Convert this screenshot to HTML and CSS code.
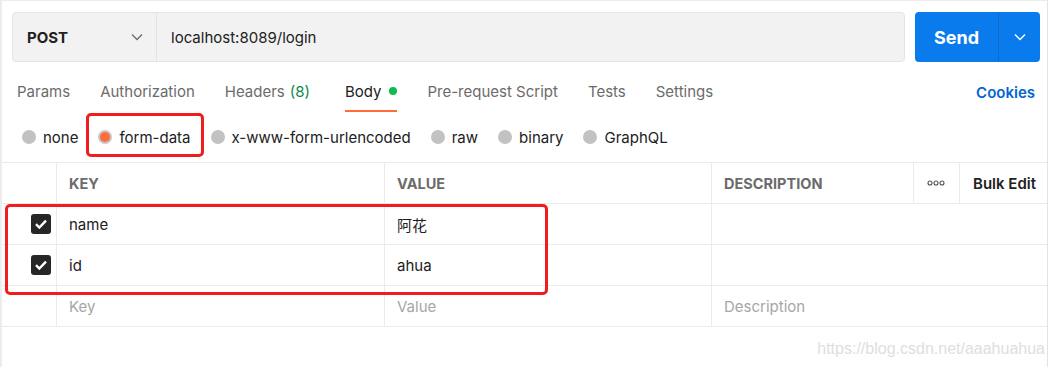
FILE: index.html
```html
<!DOCTYPE html>
<html lang="en">

<head>
    <meta charset="UTF-8">
    <meta name="viewport" content="width=device-width, initial-scale=1.0">
    <title>Request</title>
    <link rel="stylesheet" href="styles.css">
</head>

<body>
    <div class="panel">
        <!-- request bar -->
        <div class="request-bar">
            <div class="url-group">
                <div class="method">
                    <span>POST</span>
                    <svg class="chevron" width="12" height="8" viewBox="0 0 12 8"><path d="M1 1.5l5 5 5-5" fill="none" stroke="#6b6b6b" stroke-width="1.3"/></svg>
                </div>
                <div class="url">localhost:8089/login</div>
            </div>
            <div class="send">
                <span class="send-label">Send</span>
                <span class="send-more">
                    <svg width="12" height="8" viewBox="0 0 12 8"><path d="M1 1.5l5 5 5-5" fill="none" stroke="#ffffff" stroke-width="1.4"/></svg>
                </span>
            </div>
        </div>

        <!-- tabs -->
        <div class="tabs">
            <ul class="tab-list">
                <li>Params</li>
                <li>Authorization</li>
                <li>Headers <span class="count">(8)</span></li>
                <li class="active">Body <span class="dot"></span></li>
                <li>Pre-request Script</li>
                <li>Tests</li>
                <li>Settings</li>
            </ul>
            <div class="cookies">Cookies</div>
        </div>

        <!-- body types -->
        <div class="body-types">
            <label class="radio"><span class="circle"></span>none</label>
            <label class="radio selected"><span class="circle"></span>form-data</label>
            <label class="radio"><span class="circle"></span>x-www-form-urlencoded</label>
            <label class="radio"><span class="circle"></span>raw</label>
            <label class="radio"><span class="circle"></span>binary</label>
            <label class="radio"><span class="circle"></span>GraphQL</label>
            <div class="mark mark-radio"></div>
        </div>

        <!-- params table -->
        <div class="table">
            <div class="row head">
                <div class="cell check-col"></div>
                <div class="cell">KEY</div>
                <div class="cell">VALUE</div>
                <div class="cell">DESCRIPTION</div>
                <div class="cell more">
                    <svg width="18" height="6" viewBox="0 0 18 6"><circle cx="3" cy="3" r="2" fill="none" stroke="#555" stroke-width="1.1"/><circle cx="9" cy="3" r="2" fill="none" stroke="#555" stroke-width="1.1"/><circle cx="15" cy="3" r="2" fill="none" stroke="#555" stroke-width="1.1"/></svg>
                </div>
                <div class="cell bulk">Bulk Edit</div>
            </div>
            <div class="row">
                <div class="cell check-col"><span class="checkbox"><svg width="14" height="12" viewBox="0 0 14 12"><path d="M2 6.2l3.3 3.3L12 2.6" fill="none" stroke="#fff" stroke-width="2.4"/></svg></span></div>
                <div class="cell text">name</div>
                <div class="cell text">阿花</div>
                <div class="cell desc"></div>
            </div>
            <div class="row">
                <div class="cell check-col"><span class="checkbox"><svg width="14" height="12" viewBox="0 0 14 12"><path d="M2 6.2l3.3 3.3L12 2.6" fill="none" stroke="#fff" stroke-width="2.4"/></svg></span></div>
                <div class="cell text">id</div>
                <div class="cell text">ahua</div>
                <div class="cell desc"></div>
            </div>
            <div class="row">
                <div class="cell check-col"></div>
                <div class="cell hint">Key</div>
                <div class="cell hint">Value</div>
                <div class="cell desc hint">Description</div>
            </div>
            <div class="mark mark-rows"></div>
        </div>

        <div class="watermark">https://blog.csdn.net/aaahuahua</div>
    </div>
</body>

</html>
```

FILE: styles.css
```css
* {
    padding: 0;
    margin: 0;
    box-sizing: border-box;
}

body {
    background-color: #ffffff;
    font-family: Inter, "Noto Sans CJK SC", sans-serif;
    font-size: 15px;
    color: #212121;
}

.panel {
    position: relative;
    width: 1048px;
    height: 367px;
    border-top: 1px solid #ececec;
    border-left: 2px solid #ededed;
    border-right: 1px solid #e3e3e3;
}

/* request bar */
.request-bar {
    display: flex;
    gap: 10px;
    padding: 11px 0 0 10px;
}

.url-group {
    display: flex;
    width: 893px;
    height: 50px;
    background-color: #f2f2f2;
    border: 1px solid #e4e4e4;
    border-radius: 4px;
}

.method {
    width: 144px;
    display: flex;
    align-items: center;
    justify-content: space-between;
    padding: 0 13px 0 14px;
    border-right: 1px solid #e2e2e2;
    font-weight: 700;
    font-size: 15px;
    color: #212121;
}

.url {
    display: flex;
    align-items: center;
    padding-left: 14px;
    color: #212121;
}

.send {
    display: flex;
    width: 125px;
    height: 50px;
    background-color: #097bed;
    border-radius: 4px;
    color: #ffffff;
}

.send-label {
    width: 84px;
    display: flex;
    align-items: center;
    justify-content: center;
    font-weight: 700;
    font-size: 18px;
    border-right: 1px solid #0a6ccf;
}

.send-more {
    flex: 1;
    display: flex;
    align-items: center;
    justify-content: center;
}

/* tabs */
.tabs {
    display: flex;
    justify-content: space-between;
    align-items: center;
    height: 50px;
    padding: 0 12px 0 15px;
}

.tab-list {
    list-style: none;
    display: flex;
    gap: 30px;
    height: 100%;
}

.tab-list li {
    display: flex;
    align-items: center;
    gap: 5px;
    color: #6b6b6b;
    padding-top: 10px;
    border-bottom: 2px solid transparent;
}

.tab-list li.active {
    color: #212121;
    border-bottom-color: #ff6c37;
}

.count {
    color: #0b8a43;
    margin-right: 5px;
}

.dot {
    width: 8px;
    height: 8px;
    border-radius: 50%;
    background-color: #0cbb52;
    margin-left: 3px;
}

.cookies {
    color: #0265d2;
    font-weight: 600;
    padding-top: 10px;
}

/* body types */
.body-types {
    position: relative;
    display: flex;
    align-items: center;
    height: 50px;
    padding-left: 20px;
    gap: 20px;
}

.radio {
    display: flex;
    align-items: center;
    gap: 7px;
    color: #212121;
}

.circle {
    width: 14px;
    height: 14px;
    border-radius: 50%;
    background-color: #c2c2c2;
}

.radio.selected .circle {
    background-color: #ff6c37;
    border: 2px solid #c6c6c6;
}

.mark {
    position: absolute;
    border: 3px solid #f01d1d;
    border-radius: 5px;
}

.mark-radio {
    left: 84px;
    top: 1px;
    width: 118px;
    height: 44px;
}

/* table */
.table {
    position: relative;
    border-top: 1px solid #ebebeb;
}

.row {
    display: grid;
    grid-template-columns: 55px 328px 327px 202px 46px 88px;
    height: 41px;
    border-bottom: 1px solid #ebebeb;
}

.cell {
    display: flex;
    align-items: center;
    padding-left: 12px;
    border-right: 1px solid #ebebeb;
}

.cell.check-col {
    padding-left: 29px;
}

.head .cell {
    font-weight: 700;
    font-size: 14.5px;
    color: #6b6b6b;
}

.head .cell.more {
    padding-left: 13px;
}

.head .cell.bulk {
    color: #212121;
    font-weight: 600;
    font-size: 15px;
    padding-left: 13px;
    border-right: none;
}

.cell.desc {
    grid-column: span 3;
    border-right: none;
}

.cell.hint {
    color: #a6a6a6;
}

.checkbox {
    width: 20px;
    height: 20px;
    border-radius: 3px;
    background-color: #262626;
    display: flex;
    align-items: center;
    justify-content: center;
}

.mark-rows {
    left: 3px;
    top: 41px;
    width: 543px;
    height: 91px;
}

.watermark {
    position: absolute;
    right: 2px;
    bottom: 9px;
    font-family: "Liberation Sans", Arial, sans-serif;
    font-size: 16px;
    color: #dedede;
}
```
